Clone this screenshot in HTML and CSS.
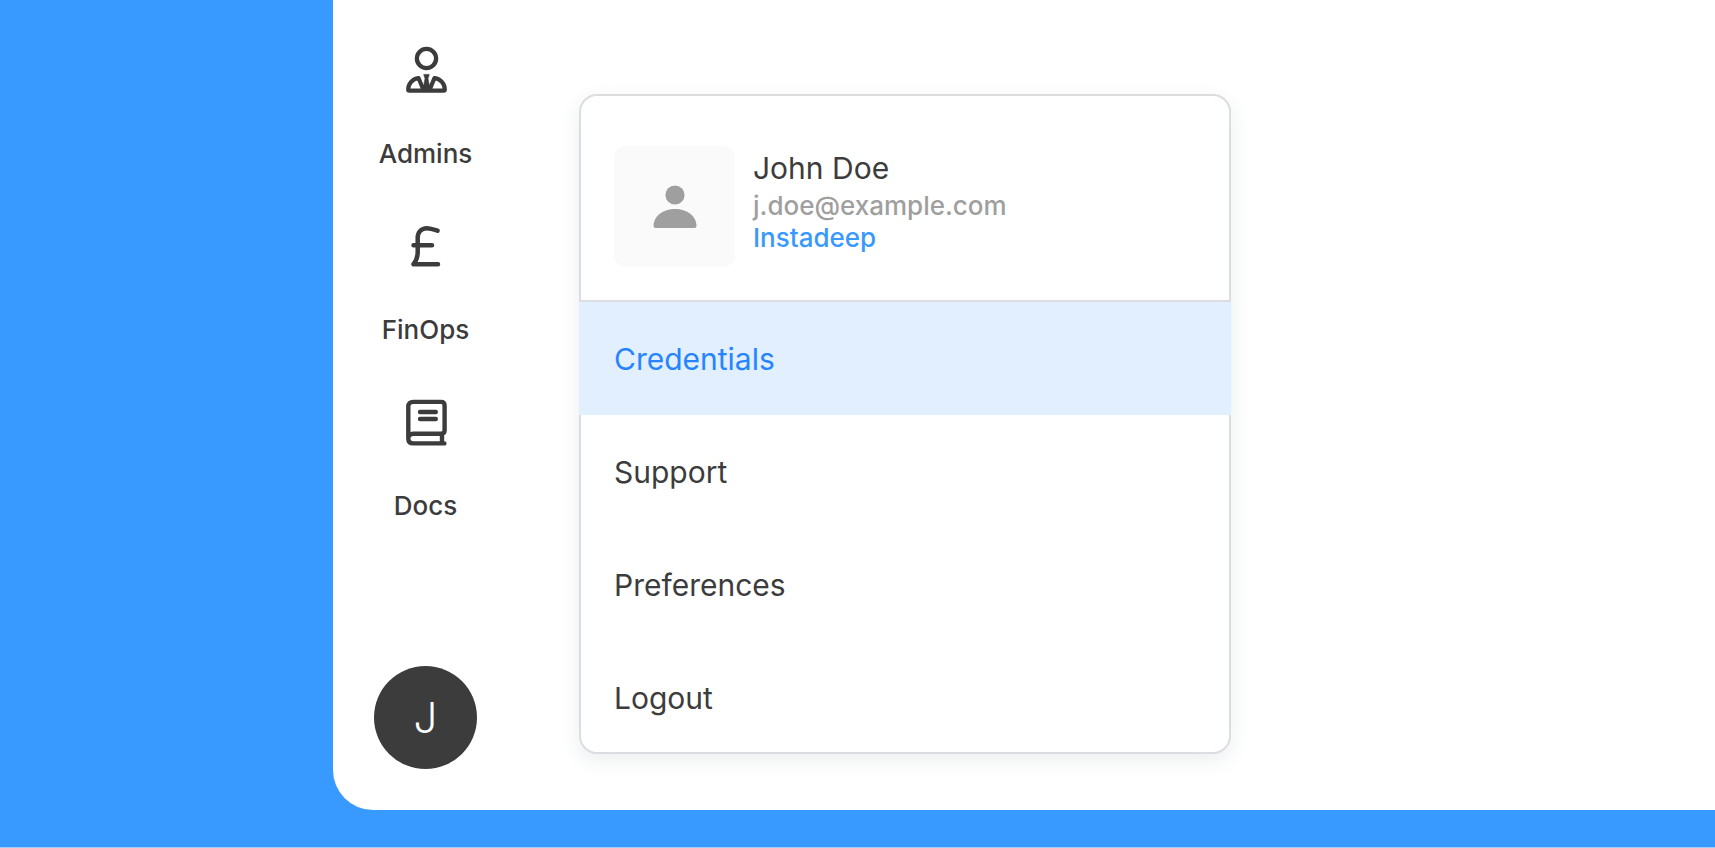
FILE: index.html
```html
<!DOCTYPE html>
<html lang="en">
<head>
<meta charset="utf-8">
<title>Account menu</title>
<link rel="stylesheet" href="styles.css">
</head>
<body>
<div class="panel">
  <nav class="sidebar" aria-label="Main">
    <div class="nav-list">
      <a class="nav-item" href="#admins">
        <svg class="nav-icon" viewBox="-1 0 56 56" aria-hidden="true">
          <circle cx="27.500" cy="16.500" r="9.600" fill="none" stroke="currentColor" stroke-width="4.300"/>
          <path d="M19.500 36C13 37 9.200 42 9.200 47.400Q9.200 48.600 10.400 48.600H44.600Q45.800 48.600 45.800 47.400C45.800 42 42 37 35.500 36L30.500 48H24.500Z" fill="none" stroke="currentColor" stroke-width="4.200" stroke-linejoin="round"/>
          <path d="M24.700 32.400H30.300L29 36.500L30 42L32 48H23L25 42L26 36.500Z" fill="currentColor" stroke="currentColor" stroke-width="0.600" stroke-linejoin="round"/>
        </svg>
        <span>Admins</span>
      </a>
      <a class="nav-item" href="#finops">
        <svg class="nav-icon" viewBox="-1 0 56 56" fill="none" stroke="currentColor" stroke-width="4.500" stroke-linecap="round" stroke-linejoin="round" aria-hidden="true">
          <path d="M38.500 12.700C34 11.200 31 10.200 28 10.200C22 10.200 18.700 14.500 18.700 20V34C18.700 39.500 16.700 43.500 14.500 46.200H39M14.500 27.200H33"/>
        </svg>
        <span>FinOps</span>
      </a>
      <a class="nav-item" href="#docs">
        <svg class="nav-icon" viewBox="-1 0 56 56" fill="none" stroke="currentColor" stroke-width="4.400" stroke-linecap="round" stroke-linejoin="round" aria-hidden="true">
          <path d="M9.300 44V12.500Q9.300 7.900 14.300 7.900H42Q45.600 7.900 45.600 11.500V36.500Q45.600 39.700 42 39.700H14.300Q9.300 39.700 9.300 44.500Q9.300 49.400 14.300 49.400H45.400M43 40V49M21 18H36.800M21 25H36.800"/>
        </svg>
        <span>Docs</span>
      </a>
    </div>
    <button class="account-button" type="button" aria-expanded="true">J</button>
  </nav>
  <main class="content">
    <section class="card">
      <header class="profile">
        <div class="profile-picture">
          <svg class="person" viewBox="0 0 44 44" aria-hidden="true">
            <circle cx="22" cy="10" r="9.600"/>
            <path d="M.5 41C.5 31 10 24 22 24S43.500 31 43.500 41Q43.500 43 41.500 43H2.500Q.5 43 .5 41Z"/>
          </svg>
        </div>
        <div class="profile-text">
          <div class="name">John Doe</div>
          <div class="email">j.doe@example.com</div>
          <a class="company" href="#company">Instadeep</a>
        </div>
      </header>
      <div class="menu">
        <a class="menu-item active" href="#credentials">Credentials</a>
        <a class="menu-item" href="#support">Support</a>
        <a class="menu-item" href="#preferences">Preferences</a>
        <button class="menu-item" type="button">Logout</button>
      </div>
    </section>
  </main>
</div>
</body>
</html>
```
FILE: styles.css
```css
* {
  box-sizing: border-box;
}

body {
  margin: 0;
  min-height: 100vh;
  display: flex;
  padding: 0 0 37px 333px;
  background: #3899ff;
  border: solid #9bccff;
  border-width: 0 0 1px;
  font-family: Inter, "Liberation Sans", sans-serif;
  color: #3c3c3c;
}

a {
  color: inherit;
  text-decoration: none;
}

button {
  border: 0;
  font-family: inherit;
  cursor: pointer;
}

.panel {
  flex: 1;
  display: flex;
  background: #fff;
  border-bottom-left-radius: 40px;
}

.sidebar {
  width: 185px;
  flex-shrink: 0;
  display: flex;
  flex-direction: column;
  justify-content: space-between;
  align-items: center;
  padding: 42px 0 41px;
}

.nav-list {
  display: flex;
  flex-direction: column;
  gap: 48px;
}

.nav-item {
  display: flex;
  flex-direction: column;
  align-items: center;
  gap: 40px;
  font-size: 26px;
  font-weight: 450;
  line-height: 32px;
}

.nav-icon {
  width: 56px;
  height: 56px;
}

.account-button {
  width: 103px;
  height: 103px;
  padding: 0;
  border-radius: 50%;
  background: #3c3c3c;
  color: #fff;
  font-size: 42px;
  font-weight: 300;
}

.content {
  flex: 1;
  padding: 94px 61px 40px;
}

.card {
  max-width: 652px;
  border: 2px solid #dcdde0;
  border-radius: 18px;
  background: #fff;
  box-shadow: 0 6px 20px rgba(30, 50, 80, 0.09);
}

.profile {
  display: flex;
  gap: 18px;
  padding: 50px 33px 33px;
  border-bottom: 2px solid #dcdde0;
}

.profile-picture {
  width: 121px;
  height: 121px;
  display: grid;
  place-items: center;
  border-radius: 12px;
  background: #fafafa;
}

.person {
  width: 44px;
  height: 44px;
  fill: #9f9f9f;
}

.name {
  font-size: 30px;
  font-weight: 400;
  line-height: 44px;
}

.email,
.company {
  display: block;
  font-size: 26px;
  font-weight: 450;
  line-height: 32px;
}

.email {
  color: #9f9f9f;
}

.company {
  color: #3899ff;
}

.menu {
  margin-bottom: -2px;
}

.menu-item {
  display: flex;
  align-items: center;
  width: 100%;
  height: 113px;
  padding: 0 33px;
  background: none;
  font-size: 30px;
  font-weight: 400;
  color: #3c3c3c;
}

.menu-item.active {
  width: auto;
  margin: 0 -2px;
  padding: 0 35px;
  background: #e2efff;
  color: #2684ff;
}
```
